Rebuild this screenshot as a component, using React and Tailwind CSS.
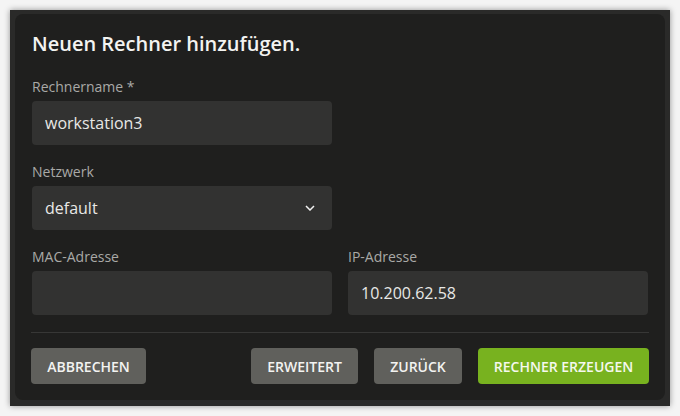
import React, { useState } from "react";

const font = { fontFamily: '"Open Sans", "Liberation Sans", sans-serif' };

function Field({ label, value, onChange, select }) {
  return (
    <div className="flex flex-col">
      <label className="mb-1 text-[14px] leading-5 text-[#a9a9a7]">{label}</label>
      <div className="relative flex h-[44px] items-center rounded-[4px] bg-[#323231] px-[13px]">
        <input
          value={value}
          onChange={(e) => onChange(e.target.value)}
          readOnly={select}
          className="w-full bg-transparent text-[16px] text-[#e8e8e6] outline-none"
        />
        {select && (
          <svg
            className="absolute right-[17px] top-[19px]"
            width="10"
            height="6"
            viewBox="0 0 10 6"
            fill="none"
          >
            <polyline points="1,1 5,5 9,1" stroke="#f2f2f2" strokeWidth="1.5" />
          </svg>
        )}
      </div>
    </div>
  );
}

export default function App() {
  const [name, setName] = useState("workstation3");
  const [network, setNetwork] = useState("default");
  const [mac, setMac] = useState("");
  const [ip, setIp] = useState("10.200.62.58");

  return (
    <div className="flex h-[416px] w-[680px] bg-[#f4f4f4] p-[10px]" style={font}>
      <div className="flex flex-1 bg-[#2a2a29] pb-[6px] pl-[5px] pr-[5px] pt-[4px] shadow-[0_0_6px_rgba(0,0,0,0.4)]">
        <div className="flex flex-1 flex-col rounded-lg bg-[#1f1f1e] pb-4 pl-[17px] pr-[17px] pt-4">
          <h2 className="text-[20px] font-semibold leading-7 text-[#f3f3f1]">
            Neuen Rechner hinzufügen.
          </h2>

          <div className="mt-[19px] grid grid-cols-2 gap-x-4 gap-y-[17px]">
            <Field label="Rechnername *" value={name} onChange={setName} />
            <div />
            <Field label="Netzwerk" value={network} onChange={setNetwork} select />
            <div />
            <Field label="MAC-Adresse" value={mac} onChange={setMac} />
            <Field label="IP-Adresse" value={ip} onChange={setIp} />
          </div>

          <div className="-mx-px mt-[17px] h-px bg-[#373736]" />

          <div className="-mx-px mt-[15px] flex items-center gap-4">
            <button className="h-9 w-[115px] rounded-[4px] bg-[#60605c] text-[14px] font-semibold text-[#f3f3f1]">
              ABBRECHEN
            </button>
            <div className="flex-1" />
            <button className="h-9 w-[107px] rounded-[4px] bg-[#60605c] text-[14px] font-semibold text-[#f3f3f1]">
              ERWEITERT
            </button>
            <button className="h-9 w-[88px] rounded-[4px] bg-[#60605c] text-[14px] font-semibold text-[#f3f3f1]">
              ZURÜCK
            </button>
            <button className="h-9 w-[171px] rounded-[4px] bg-[#78b21f] text-[14px] font-semibold text-[#f5f8ee]">
              RECHNER ERZEUGEN
            </button>
          </div>
        </div>
      </div>
    </div>
  );
}
